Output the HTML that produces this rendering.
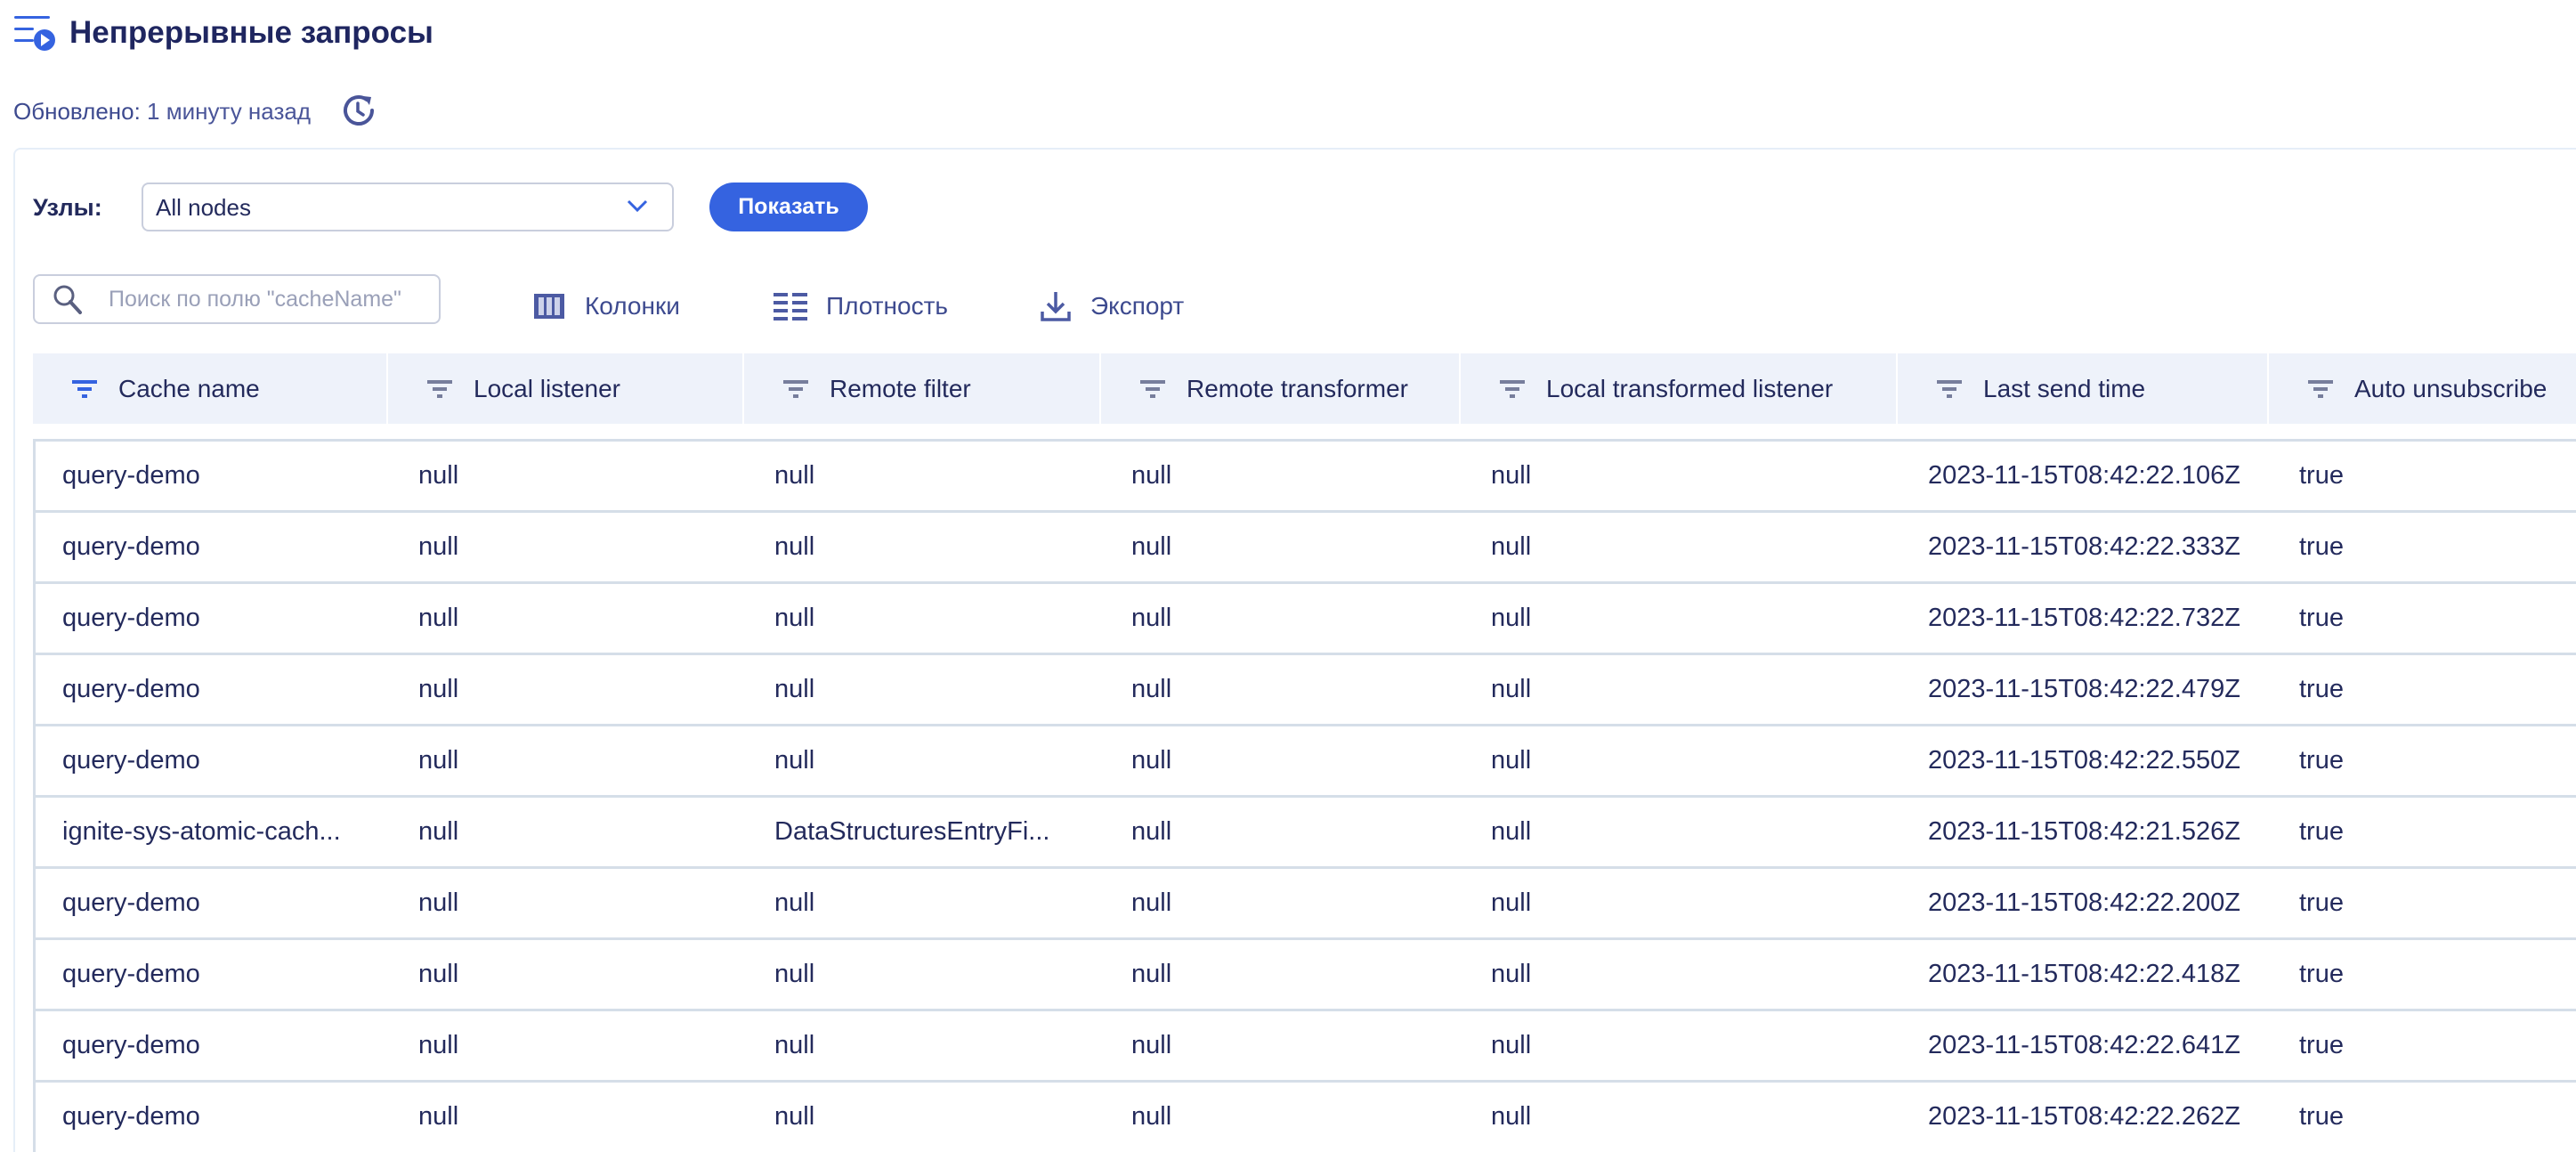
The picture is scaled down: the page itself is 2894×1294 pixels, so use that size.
<!DOCTYPE html>
<html><head><meta charset="utf-8"><style>
*{margin:0;padding:0;box-sizing:border-box}
html,body{width:2894px;height:1294px;overflow:hidden}
body{background:#fff;font-family:"Liberation Sans","DejaVu Sans",sans-serif;color:#232a5c;position:relative}
.a{position:absolute;white-space:nowrap}
.hd{position:absolute;top:397px;height:79px;background:#eef2fa;border-right:2px solid #fff}
.hd span{position:absolute;left:96px;top:0;line-height:79px;font-size:28px;color:#232a5c}
.hd svg{position:absolute;left:44px;top:28px}
.row{position:absolute;left:37px;width:2857px;height:80px;border-top:3px solid #d5dee8;border-left:3px solid #d5dee8}
.row span{position:absolute;top:0;line-height:77px;font-size:29px;color:#232a5c}
</style></head><body>
<svg class="a" style="left:14px;top:14px" width="50" height="46" viewBox="0 0 50 46">
<rect x="2" y="4" width="40" height="3" rx="1.5" fill="#3563e0"/>
<rect x="2" y="17" width="22" height="3" rx="1.5" fill="#3563e0"/>
<rect x="2" y="30" width="22" height="3" rx="1.5" fill="#3563e0"/>
<circle cx="36" cy="31" r="12" fill="#3563e0"/>
<path d="M32 24 L42 31 L32 38 Z" fill="#fff"/>
</svg>
<div class="a" style="left:78px;top:16px;font-size:35px;font-weight:bold;color:#1f2660;line-height:42px">Непрерывные запросы</div>
<div class="a" style="left:15px;top:110px;font-size:26px;line-height:30px;color:#4a5599"><span style="color:#3d4a8f">Обновлено:</span> 1 минуту назад</div>
<svg class="a" style="left:384px;top:104px" width="40" height="40" viewBox="0 0 40 40">
<path d="M28 8 A15 15 0 1 0 34 20" fill="none" stroke="#4a5599" stroke-width="4" stroke-linecap="round"/>
<path d="M24 4 L33 5 L31 14 Z" fill="#4a5599"/>
<path d="M18 12 V21 L24 25" fill="none" stroke="#4a5599" stroke-width="3.5" stroke-linecap="round"/>
</svg>
<div class="a" style="left:15px;top:166px;width:2900px;height:1140px;border:2px solid #e6eef8;border-radius:8px"></div>
<div class="a" style="left:37px;top:217px;font-size:27px;font-weight:bold;line-height:32px;color:#232a5c">Узлы:</div>
<div class="a" style="left:159px;top:205px;width:598px;height:55px;border:2px solid #c9cedd;border-radius:8px"></div>
<div class="a" style="left:175px;top:217px;font-size:26px;line-height:32px;color:#232a5c">All nodes</div>
<svg class="a" style="left:703px;top:222px" width="26" height="18" viewBox="0 0 26 18"><path d="M3 4 L13 14 L23 4" fill="none" stroke="#3563e0" stroke-width="3"/></svg>
<div class="a" style="left:797px;top:205px;width:178px;height:55px;background:#3563e0;border-radius:28px;color:#fff;font-size:25px;font-weight:bold;text-align:center;line-height:55px">Показать</div>
<div class="a" style="left:37px;top:308px;width:458px;height:56px;border:2px solid #c9cedd;border-radius:8px"></div>
<svg class="a" style="left:58px;top:318px" width="36" height="36" viewBox="0 0 36 36"><circle cx="14" cy="14" r="10" fill="none" stroke="#5a6080" stroke-width="3"/><path d="M21 21 L32 33" stroke="#5a6080" stroke-width="4" stroke-linecap="round"/></svg>
<div class="a" style="left:122px;top:320px;font-size:25px;line-height:32px;color:#9aa0b8">Поиск по полю "cacheName"</div>
<svg class="a" style="left:600px;top:330px" width="34" height="28" viewBox="0 0 34 28"><rect x="0" y="0" width="34" height="28" fill="#4c5aa3"/><rect x="5" y="4" width="6" height="20" fill="#cdd2ea"/><rect x="14" y="4" width="6" height="20" fill="#cdd2ea"/><rect x="23" y="4" width="6" height="20" fill="#cdd2ea"/></svg>
<div class="a" style="left:657px;top:328px;font-size:28px;line-height:32px;color:#3d4a8f">Колонки</div>
<svg class="a" style="left:869px;top:329px" width="38" height="32" viewBox="0 0 38 32" fill="#4c5aa3"><rect x="0" y="0" width="16" height="4"/><rect x="21" y="0" width="17" height="4"/><rect x="0" y="9" width="16" height="4"/><rect x="21" y="9" width="17" height="4"/><rect x="0" y="18" width="16" height="4"/><rect x="21" y="18" width="17" height="4"/><rect x="0" y="27" width="16" height="4"/><rect x="21" y="27" width="17" height="4"/></svg>
<div class="a" style="left:928px;top:328px;font-size:28px;line-height:32px;color:#3d4a8f">Плотность</div>
<svg class="a" style="left:1168px;top:326px" width="36" height="36" viewBox="0 0 36 36" fill="none" stroke="#4c5aa3" stroke-width="3.5"><path d="M18 2 V24 M9 15 L18 24 L27 15"/><path d="M3 24 V33 H33 V24"/></svg>
<div class="a" style="left:1225px;top:328px;font-size:28px;line-height:32px;color:#3d4a8f">Экспорт</div>

<div class="hd" style="left:37px;width:399px"><svg width="30" height="24" viewBox="0 0 30 24" fill="#3563e0"><rect x="0" y="2" width="28" height="4"/><rect x="6" y="10" width="16" height="4"/><rect x="11" y="18" width="6" height="4"/></svg><span>Cache name</span></div>
<div class="hd" style="left:436px;width:400px"><svg width="30" height="24" viewBox="0 0 30 24" fill="#777e9c"><rect x="0" y="2" width="28" height="4"/><rect x="6" y="10" width="16" height="4"/><rect x="11" y="18" width="6" height="4"/></svg><span>Local listener</span></div>
<div class="hd" style="left:836px;width:401px"><svg width="30" height="24" viewBox="0 0 30 24" fill="#777e9c"><rect x="0" y="2" width="28" height="4"/><rect x="6" y="10" width="16" height="4"/><rect x="11" y="18" width="6" height="4"/></svg><span>Remote filter</span></div>
<div class="hd" style="left:1237px;width:404px"><svg width="30" height="24" viewBox="0 0 30 24" fill="#777e9c"><rect x="0" y="2" width="28" height="4"/><rect x="6" y="10" width="16" height="4"/><rect x="11" y="18" width="6" height="4"/></svg><span>Remote transformer</span></div>
<div class="hd" style="left:1641px;width:491px"><svg width="30" height="24" viewBox="0 0 30 24" fill="#777e9c"><rect x="0" y="2" width="28" height="4"/><rect x="6" y="10" width="16" height="4"/><rect x="11" y="18" width="6" height="4"/></svg><span>Local transformed listener</span></div>
<div class="hd" style="left:2132px;width:417px"><svg width="30" height="24" viewBox="0 0 30 24" fill="#777e9c"><rect x="0" y="2" width="28" height="4"/><rect x="6" y="10" width="16" height="4"/><rect x="11" y="18" width="6" height="4"/></svg><span>Last send time</span></div>
<div class="hd" style="left:2549px;width:400px"><svg width="30" height="24" viewBox="0 0 30 24" fill="#777e9c"><rect x="0" y="2" width="28" height="4"/><rect x="6" y="10" width="16" height="4"/><rect x="11" y="18" width="6" height="4"/></svg><span>Auto unsubscribe</span></div>

<div class="row" style="top:493px"><span style="left:30px">query-demo</span><span style="left:430px">null</span><span style="left:830px">null</span><span style="left:1231px">null</span><span style="left:1635px">null</span><span style="left:2126px">2023-11-15T08:42:22.106Z</span><span style="left:2543px">true</span></div>
<div class="row" style="top:573px"><span style="left:30px">query-demo</span><span style="left:430px">null</span><span style="left:830px">null</span><span style="left:1231px">null</span><span style="left:1635px">null</span><span style="left:2126px">2023-11-15T08:42:22.333Z</span><span style="left:2543px">true</span></div>
<div class="row" style="top:653px"><span style="left:30px">query-demo</span><span style="left:430px">null</span><span style="left:830px">null</span><span style="left:1231px">null</span><span style="left:1635px">null</span><span style="left:2126px">2023-11-15T08:42:22.732Z</span><span style="left:2543px">true</span></div>
<div class="row" style="top:733px"><span style="left:30px">query-demo</span><span style="left:430px">null</span><span style="left:830px">null</span><span style="left:1231px">null</span><span style="left:1635px">null</span><span style="left:2126px">2023-11-15T08:42:22.479Z</span><span style="left:2543px">true</span></div>
<div class="row" style="top:813px"><span style="left:30px">query-demo</span><span style="left:430px">null</span><span style="left:830px">null</span><span style="left:1231px">null</span><span style="left:1635px">null</span><span style="left:2126px">2023-11-15T08:42:22.550Z</span><span style="left:2543px">true</span></div>
<div class="row" style="top:893px"><span style="left:30px">ignite-sys-atomic-cach...</span><span style="left:430px">null</span><span style="left:830px">DataStructuresEntryFi...</span><span style="left:1231px">null</span><span style="left:1635px">null</span><span style="left:2126px">2023-11-15T08:42:21.526Z</span><span style="left:2543px">true</span></div>
<div class="row" style="top:973px"><span style="left:30px">query-demo</span><span style="left:430px">null</span><span style="left:830px">null</span><span style="left:1231px">null</span><span style="left:1635px">null</span><span style="left:2126px">2023-11-15T08:42:22.200Z</span><span style="left:2543px">true</span></div>
<div class="row" style="top:1053px"><span style="left:30px">query-demo</span><span style="left:430px">null</span><span style="left:830px">null</span><span style="left:1231px">null</span><span style="left:1635px">null</span><span style="left:2126px">2023-11-15T08:42:22.418Z</span><span style="left:2543px">true</span></div>
<div class="row" style="top:1133px"><span style="left:30px">query-demo</span><span style="left:430px">null</span><span style="left:830px">null</span><span style="left:1231px">null</span><span style="left:1635px">null</span><span style="left:2126px">2023-11-15T08:42:22.641Z</span><span style="left:2543px">true</span></div>
<div class="row" style="top:1213px;height:81px"><span style="left:30px">query-demo</span><span style="left:430px">null</span><span style="left:830px">null</span><span style="left:1231px">null</span><span style="left:1635px">null</span><span style="left:2126px">2023-11-15T08:42:22.262Z</span><span style="left:2543px">true</span></div>
</body></html>
